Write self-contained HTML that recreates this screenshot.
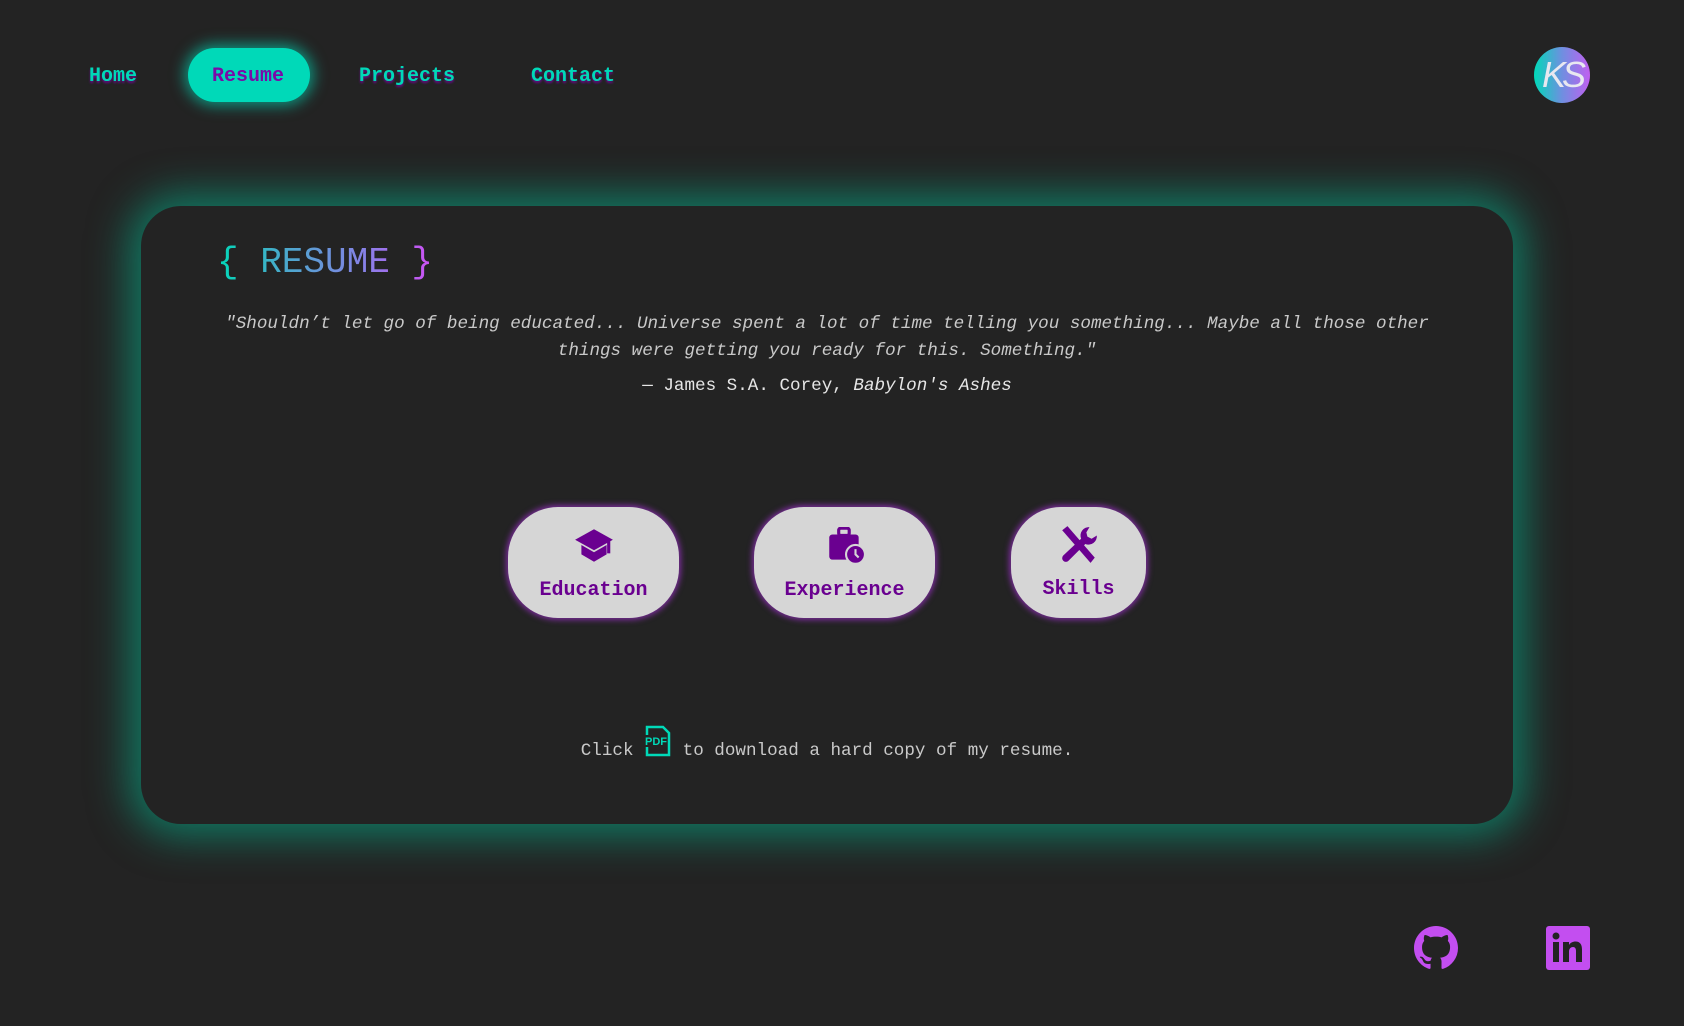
<!DOCTYPE html>
<html><head><meta charset="utf-8"><style>
*{margin:0;padding:0;box-sizing:border-box}
html,body{width:1684px;height:1026px;overflow:hidden;background:#232323;font-family:"Liberation Mono",monospace}
.nav a{position:absolute;top:65px;font-size:20px;font-weight:bold;color:#00d9b8;text-decoration:none;line-height:24px;text-shadow:0 2px 2px #6a0a8a}
.pill{position:absolute;left:188px;top:48px;width:122px;height:54px;border-radius:27px;background:#00d9b8;box-shadow:0 0 14px 4px rgba(0,217,184,.6)}
.avatar{position:absolute;left:1534px;top:47px;width:56px;height:56px;border-radius:50%;background:linear-gradient(90deg,#00d9b8,#6f8fe0 50%,#c060f0);color:#e8e8f0;font-family:"Liberation Sans",sans-serif;font-style:italic;font-size:36px;line-height:56px;text-align:center;letter-spacing:-4px}
.card{position:absolute;left:141px;top:206px;width:1372px;height:618px;border-radius:40px;background:#232323;box-shadow:0 0 40px 12px rgba(0,190,150,.55)}
.title{position:absolute;left:76px;top:36px;font-size:36px;line-height:42px;background:linear-gradient(90deg,#00d9b8,#3fb0c8 25%,#8a7fe8 70%,#d050f5);-webkit-background-clip:text;color:transparent}
.quote{position:absolute;left:0;width:100%;text-align:center;color:#c9c9c9;font-size:17.6px;font-style:italic;line-height:27px;top:105px}
.attr{position:absolute;left:0;width:100%;text-align:center;color:#e6e6e6;font-size:17.6px;top:170px}
.btn{position:absolute;top:301px;height:111px;background:#d6d6d6;border-radius:50px;box-shadow:0 0 6px 2px #7a2c9a;color:#6a0090;font-weight:bold;font-size:20px;text-align:center}
.btn svg{display:block;margin:20px auto 14px}
.click{position:absolute;left:0;width:100%;text-align:center;top:519px;color:#c9c9c9;font-size:17.6px}
</style></head><body>
<div class="pill"></div>
<div class="nav"><a style="left:89px">Home</a><a style="left:212px;color:#7a0aa8;text-shadow:none">Resume</a><a style="left:359px">Projects</a><a style="left:531px">Contact</a></div>
<div class="avatar">KS</div>
<div class="card">
<div class="title">{ RESUME }</div>
<div class="quote">"Shouldn’t let go of being educated... Universe spent a lot of time telling you something... Maybe all those other<br>things were getting you ready for this. Something."</div>
<div class="attr">— James S.A. Corey, <i>Babylon's Ashes</i></div>
<div class="btn" style="left:367px;width:171px"><svg width="42" height="38" viewBox="0 0 40 36"><path d="M20 2L38 12 20 22 2 12Z" fill="#6a0090"/><path d="M8 17v9l12 7 12-7v-9l-12 7z" fill="#6a0090"/><path d="M34 13v12" stroke="#6a0090" stroke-width="3"/></svg>Education</div>
<div class="btn" style="left:613px;width:181px"><svg width="42" height="38" viewBox="0 0 40 36"><rect x="14" y="1" width="10" height="7" rx="2" fill="none" stroke="#6a0090" stroke-width="3"/><rect x="5" y="7" width="28" height="24" rx="3" fill="#6a0090"/><circle cx="30" cy="26" r="9" fill="#6a0090" stroke="#d6d6d6" stroke-width="2"/><path d="M30 21v5l3 3" stroke="#d6d6d6" stroke-width="2" fill="none"/></svg>Experience</div>
<div class="btn" style="left:870px;width:135px"><svg width="42" height="42" viewBox="0 0 40 40" style="margin-top:17px;margin-bottom:12px"><path d="M4 6l5-4 26 30-4 5z" fill="#6a0090"/><path d="M30 3a8 8 0 0 0-8 11L5 30a3 3 0 0 0 5 5L26 19a8 8 0 0 0 11-8l-5 3-4-2-1-4z" fill="#6a0090"/></svg>Skills</div>
<div class="click">Click <svg width="28" height="32" viewBox="0 0 28 32" style="vertical-align:-2px"><path d="M3 2h16l6 6v22H3z" fill="none" stroke="#00d9b8" stroke-width="2.5"/><rect x="0" y="10" width="22" height="12" fill="#232323"/><text x="1" y="20" font-family="Liberation Sans" font-weight="bold" font-size="11" fill="#00d9b8">PDF</text></svg> to download a hard copy of my resume.</div>
</div>
<svg style="position:absolute;left:1414px;top:926px" width="44" height="44" viewBox="0 0 16 16"><path fill="#c34ef0" d="M8 0C3.58 0 0 3.58 0 8c0 3.540 2.290 6.530 5.470 7.590.4.07.55-.17.55-.38 0-.19-.01-.82-.01-1.49-2.01.37-2.53-.49-2.690-.94-.09-.23-.48-.94-.82-1.130-.28-.15-.68-.52-.01-.53.63-.01 1.080.58 1.230.82.72 1.210 1.870.87 2.330.66.07-.52.28-.87.51-1.070-1.780-.2-3.640-.89-3.640-3.950 0-.87.31-1.590.82-2.150-.08-.2-.36-1.020.08-2.120 0 0 .67-.21 2.200.82.64-.18 1.320-.27 2-.27.68 0 1.360.09 2 .27 1.530-1.040 2.200-.82 2.200-.82.44 1.100.16 1.920.08 2.120.51.56.82 1.270.82 2.150 0 3.070-1.870 3.750-3.650 3.950.29.25.54.73.54 1.480 0 1.070-.01 1.930-.01 2.200 0 .21.15.46.55.38A8.013 8.013 0 0016 8c0-4.420-3.580-8-8-8z"/></svg>
<svg style="position:absolute;left:1546px;top:926px" width="44" height="44" viewBox="0 0 44 44"><rect width="44" height="44" rx="3" fill="#c34ef0"/><rect x="7" y="16" width="6" height="20" fill="#232323"/><circle cx="10" cy="10" r="3.5" fill="#232323"/><path d="M17 16h6v3c1.5-2.5 4-3.5 6.5-3.5 4.5 0 6.5 3 6.5 8V36h-6V25c0-2.5-1-4-3-4s-4 1.5-4 4.5V36h-6z" fill="#232323"/></svg>
</body></html>
